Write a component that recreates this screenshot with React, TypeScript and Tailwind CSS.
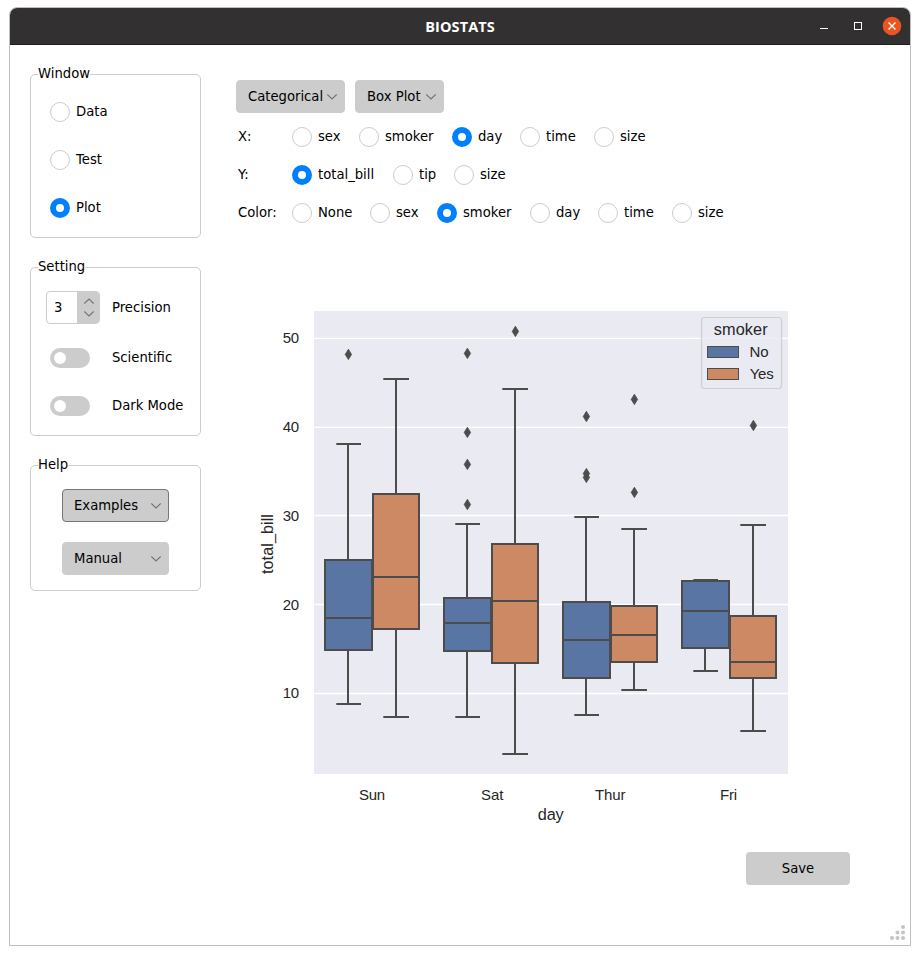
import React from "react";

type Box = {
  x: number; w: number; top: number; bottom: number; median: number;
  mid: number; capL: number; capR: number; hi: number; lo: number; fill: string;
};

const BLUE = "#5875a4";
const ORANGE = "#cc8963";
const INK = "#4c4c4c";

const boxes: Box[] = [
  { x: 325, w: 47, top: 560, bottom: 650, median: 618, mid: 348, capL: 336.3, capR: 361, hi: 444, lo: 704, fill: BLUE },
  { x: 373, w: 46, top: 494, bottom: 629, median: 577, mid: 396, capL: 383.3, capR: 409, hi: 379, lo: 717, fill: ORANGE },
  { x: 444, w: 47, top: 598, bottom: 651, median: 623, mid: 467, capL: 455.3, capR: 480, hi: 524, lo: 717, fill: BLUE },
  { x: 492, w: 46, top: 544, bottom: 663, median: 601, mid: 515, capL: 502.3, capR: 528, hi: 389, lo: 754, fill: ORANGE },
  { x: 563, w: 47, top: 602, bottom: 678, median: 640, mid: 586, capL: 574.3, capR: 599, hi: 517, lo: 715, fill: BLUE },
  { x: 611, w: 46, top: 606, bottom: 662, median: 635, mid: 634, capL: 621.3, capR: 647, hi: 529, lo: 690, fill: ORANGE },
  { x: 682, w: 47, top: 581, bottom: 648, median: 611, mid: 705, capL: 693.3, capR: 718, hi: 580, lo: 671, fill: BLUE },
  { x: 730, w: 46, top: 616, bottom: 678, median: 662, mid: 753, capL: 740.3, capR: 766, hi: 525, lo: 731, fill: ORANGE },
];

const fliers: [number, number][] = [
  [348.4, 354.4], [467.4, 353.4], [467.4, 432.4], [467.4, 464.4], [467.4, 504.5], [515.4, 331.4],
  [586.4, 416.5], [586.4, 473.6], [586.4, 477.4], [634.4, 399.4], [634.4, 492.4], [753.4, 425.5],
];

const yTicks = [
  { label: "50", line: 338.4, base: 342.8 },
  { label: "40", line: 427.4, base: 432 },
  { label: "30", line: 515.5, base: 520.8 },
  { label: "20", line: 604.5, base: 609.7 },
  { label: "10", line: 693.5, base: 697.8 },
];

const xTicks = [
  { label: "Sun", x: 359, w: 26 },
  { label: "Sat", x: 481, w: 22.5 },
  { label: "Thur", x: 595, w: 30.5 },
  { label: "Fri", x: 720, w: 17 },
];

function Chart() {
  return (
    <svg width="560" height="540" viewBox="250 300 560 540" className="block font-['Liberation_Sans',Arial,sans-serif]">
      <rect x="314" y="311" width="474" height="463" fill="#eaeaf2" />
      {yTicks.map((t) => (
        <g key={t.label}>
          <line x1="314" x2="788" y1={t.line} y2={t.line} stroke="#fff" strokeWidth="1.4" />
          <text x="282.7" y={t.base} fontSize="15" textLength="16.5" fill="#262626">{t.label}</text>
        </g>
      ))}
      {boxes.map((b) => (
        <g key={b.mid} stroke={INK} strokeWidth="2" fill="none">
          <path d={`M${b.mid} ${b.hi}V${b.top}M${b.mid} ${b.bottom}V${b.lo}M${b.capL} ${b.hi}H${b.capR}M${b.capL} ${b.lo}H${b.capR}`} />
          <rect x={b.x} y={b.top} width={b.w} height={b.bottom - b.top} fill={b.fill} />
          <path d={`M${b.x} ${b.median}h${b.w}`} />
        </g>
      ))}
      {fliers.map(([x, y]) => (
        <path key={`${x}-${y}`} d={`M${x} ${y - 5.2}L${x + 3.2} ${y}L${x} ${y + 5.2}L${x - 3.2} ${y}Z`} fill={INK} stroke={INK} strokeWidth="0.8" strokeLinejoin="round" />
      ))}
      <rect x="701.5" y="317.5" width="80" height="71" rx="3" fill="#eaeaf2" fillOpacity="0.8" stroke="#ccc" strokeOpacity="0.9" strokeWidth="1.2" />
      <text x="713.7" y="335" fontSize="16.3" textLength="54" fill="#262626">smoker</text>
      <rect x="707.5" y="346.5" width="31" height="11" fill={BLUE} stroke={INK} />
      <rect x="707.5" y="368.5" width="31" height="11" fill={ORANGE} stroke={INK} />
      <text x="749.5" y="357.2" fontSize="15" textLength="19" fill="#262626">No</text>
      <text x="749.7" y="379.2" fontSize="15" textLength="24" fill="#262626">Yes</text>
      {xTicks.map((t) => (
        <text key={t.label} x={t.x} y="800" fontSize="15" textLength={t.w} fill="#262626">{t.label}</text>
      ))}
      <text x="537.7" y="819.5" fontSize="16.3" textLength="26" fill="#262626">day</text>
      <text transform="translate(273 574) rotate(-90)" fontSize="16.3" textLength="60" fill="#262626">total_bill</text>
    </svg>
  );
}

function Radio({ label, checked, className = "" }: { label: string; checked?: boolean; className?: string }) {
  return (
    <label className={`flex h-5 shrink-0 items-center ${className}`}>
      {checked ? (
        <span className="size-5 shrink-0 rounded-full border-[6px] border-[#007fff] bg-white" />
      ) : (
        <span className="size-5 shrink-0 rounded-full border border-[#ccc] bg-white" />
      )}
      <span className="-mt-px ml-1.5 whitespace-nowrap">{label}</span>
    </label>
  );
}

function Chevron({ up }: { up?: boolean }) {
  return (
    <svg width="10" height="6" viewBox="0 0 10 6" className="shrink-0" fill="none" stroke="#737373" strokeWidth="1.1">
      <path d={up ? "M0.3 5.6L5 1L9.7 5.6" : "M0.3 0.4L5 5L9.7 0.4"} />
    </svg>
  );
}

function Combo({ label, className = "" }: { label: string; className?: string }) {
  return (
    <button className={`flex h-[33px] items-center justify-between rounded-[4px] border bg-[#ccc] pr-[7px] pl-[11px] ${className}`}>
      <span className="whitespace-nowrap">{label}</span>
      <Chevron />
    </button>
  );
}

function Group({ title, className = "", children }: { title: string; className?: string; children: React.ReactNode }) {
  return (
    <section className={`flex w-[171px] flex-col rounded-[5px] border border-[#ccc] ${className}`}>
      <h2 className="-mt-[10px] ml-[7px] h-[18px] self-start bg-white leading-[18px]">{title}</h2>
      {children}
    </section>
  );
}

function Toggle() {
  return (
    <span className="flex h-5 w-10 items-center rounded-full bg-[#ccc] pl-1">
      <span className="size-3 rounded-full bg-white" />
    </span>
  );
}

export default function App() {
  return (
    <div className="h-[955px] w-[920px] bg-white pt-[7px] pl-[9px] font-['DejaVu_Sans',sans-serif] text-[13.2px] leading-[18px] text-black">
      <div className="flex h-[939px] w-[902px] flex-col overflow-hidden rounded-t-[8px] border border-[#bfbfbf]">
        <header className="grid h-[37px] shrink-0 grid-cols-[1fr_auto_1fr] items-center border-b border-[#1d1b1c] bg-[#333031] text-white">
          <span />
          <h1 className="pt-0.5 font-['Open_Sans',sans-serif] text-[14.5px] font-bold tracking-[0.1px]">BIOSTATS</h1>
          <div className="flex items-center justify-end pr-2">
            <svg width="82" height="20" viewBox="0 0 82 20" fill="none" stroke="#fff">
              <path d="M0 12.5H8" />
              <rect x="34.5" y="6.5" width="7" height="7" />
              <circle cx="72" cy="10" r="9.3" fill="#e95420" stroke="none" />
              <path d="M68.5 6.5L75.5 13.5M75.5 6.5L68.5 13.5" strokeWidth="1.3" />
            </svg>
          </div>
        </header>
        <div className="flex min-h-0 flex-1">
          <aside className="flex w-[191px] shrink-0 flex-col gap-[29px] pt-[29px] pl-5">
            <Group title="Window" className="h-[164px]">
              <div className="mt-[19px] flex flex-col gap-7 pl-[19px]">
                <Radio label="Data" />
                <Radio label="Test" />
                <Radio label="Plot" checked />
              </div>
            </Group>
            <Group title="Setting" className="h-[169px]">
              <div className="mt-[15px] flex h-[33px] items-center pl-[15px]">
                <div className="flex h-[33px] w-[54px] overflow-hidden rounded-[4px] border border-[#ccc]">
                  <span className="flex w-[30px] items-center pl-[7px]">3</span>
                  <span className="flex flex-1 flex-col items-center justify-center gap-[7px] bg-[#ccc] pl-px">
                    <Chevron up />
                    <Chevron />
                  </span>
                </div>
                <span className="ml-3">Precision</span>
              </div>
              <div className="mt-6 flex h-5 items-center gap-[22px] pl-[19px]">
                <Toggle />
                <span className="-mt-px">Scientific</span>
              </div>
              <div className="mt-7 flex h-5 items-center gap-[22px] pl-[19px]">
                <Toggle />
                <span className="-mt-px whitespace-nowrap">Dark Mode</span>
              </div>
            </Group>
            <Group title="Help" className="h-[126px]">
              <div className="mt-[15px] flex flex-col gap-5 pl-[31px]">
                <Combo label="Examples" className="w-[107px] border-[#777]" />
                <Combo label="Manual" className="w-[107px] border-[#ccc]" />
              </div>
            </Group>
          </aside>
          <main className="flex flex-1 flex-col pt-[35px]">
            <div className="flex gap-2.5 pl-[35px]">
              <Combo label="Categorical" className="w-[109px] border-[#ccc]" />
              <Combo label="Box Plot" className="w-[89px] border-[#ccc]" />
            </div>
            <div className="mt-3.5 flex flex-col gap-[18px] pl-[37px]">
              <div className="flex h-5 items-center">
                <span className="-mt-px w-[54px]">X:</span>
                <Radio label="sex" className="w-[67px]" />
                <Radio label="smoker" className="w-[93px]" />
                <Radio label="day" checked className="w-[68px]" />
                <Radio label="time" className="w-[74px]" />
                <Radio label="size" />
              </div>
              <div className="flex h-5 items-center">
                <span className="-mt-px w-[54px]">Y:</span>
                <Radio label="total_bill" checked className="w-[101px]" />
                <Radio label="tip" className="w-[61px]" />
                <Radio label="size" />
              </div>
              <div className="flex h-5 items-center">
                <span className="-mt-px w-[54px]">Color:</span>
                <Radio label="None" className="w-[78px]" />
                <Radio label="sex" className="w-[67px]" />
                <Radio label="smoker" checked className="w-[93px]" />
                <Radio label="day" className="w-[68px]" />
                <Radio label="time" className="w-[74px]" />
                <Radio label="size" />
              </div>
            </div>
            <div className="mt-[77px] pl-[49px]">
              <Chart />
            </div>
            <button className="mt-3 mr-[60px] h-[33px] w-[104px] self-end rounded-[4px] bg-[#ccc]">Save</button>
            <svg width="15" height="15" viewBox="0 0 15 15" className="mt-10 mr-[5px] self-end" fill="#c4c4c4">
              {[[13, 2], [7.5, 7.5], [13, 7.5], [2, 13], [7.5, 13], [13, 13]].map(([cx, cy]) => (
                <circle key={`${cx}-${cy}`} cx={cx} cy={cy} r="2" />
              ))}
            </svg>
          </main>
        </div>
      </div>
    </div>
  );
}
